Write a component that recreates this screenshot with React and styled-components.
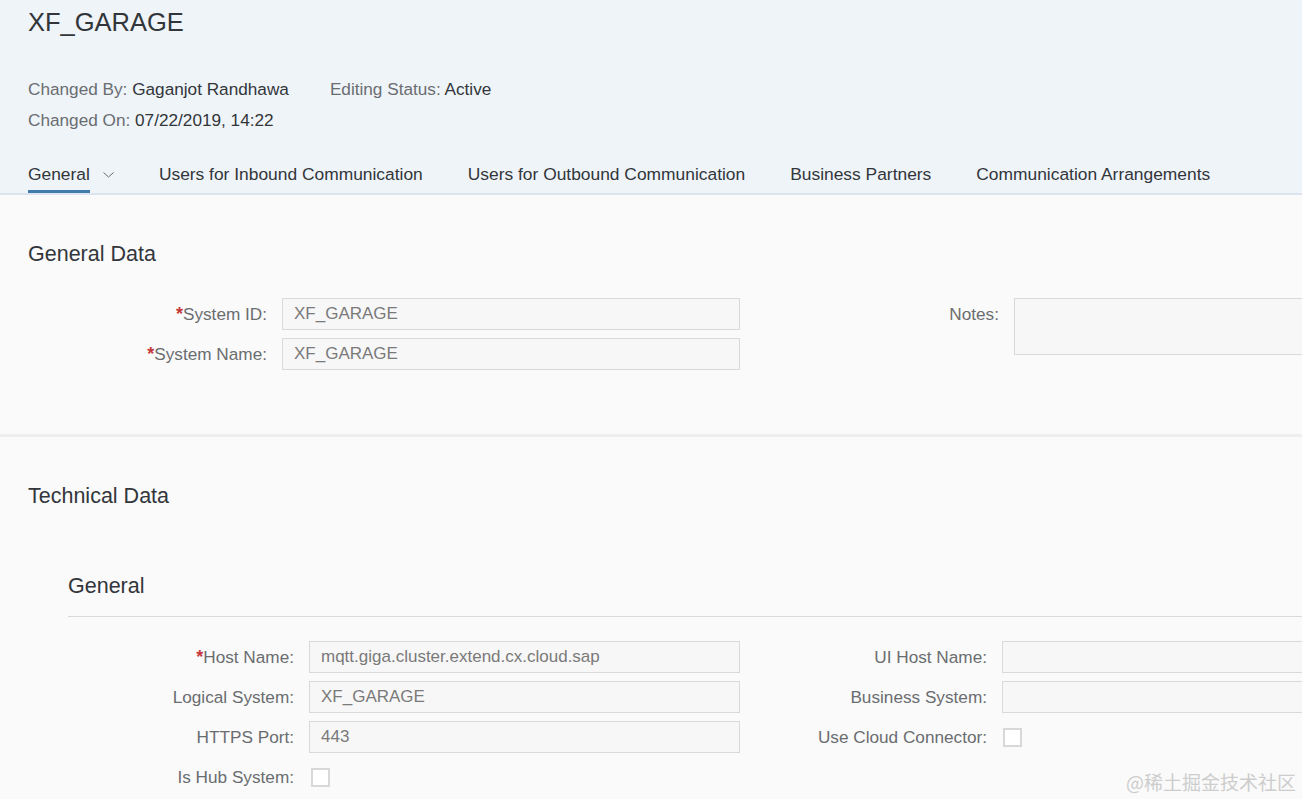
import React from 'react';
import styled, { createGlobalStyle } from 'styled-components';

const GlobalStyle = createGlobalStyle`
  html, body { margin: 0; padding: 0; background: #fafafa; }
  body { font-family: "Liberation Sans", Arial, sans-serif; }
  * { box-sizing: border-box; }
`;

const Page = styled.div`
  width: 1302px;
  height: 799px;
  overflow: hidden;
  position: relative;
  background: #fafafa;
  color: #32363a;
`;

const Header = styled.header`
  background: #eff4f9;
  padding: 6px 28px 0;
  border-bottom: 2px solid #dce5ef;
`;

const Title = styled.h1`
  margin: 0;
  font-size: 25.5px;
  font-weight: normal;
  line-height: 32px;
  color: #32363a;
`;

const Meta = styled.div`
  margin-top: 36px;
  display: flex;
  gap: 41px;
`;

const MetaColumn = styled.div`
  display: flex;
  flex-direction: column;
`;

const MetaLine = styled.div`
  font-size: 17.2px;
  line-height: 31px;
  white-space: nowrap;
`;

const MetaLabel = styled.span`
  color: #6a6d70;
`;

const MetaValue = styled.span`
  color: #32363a;
`;

const TabBar = styled.nav`
  display: flex;
  gap: 45px;
`;

const Tab = styled.div`
  display: flex;
  align-items: flex-start;
`;

const TabLabel = styled.span`
  font-size: 17.4px;
  line-height: 20px;
  padding: 28px 0 6px;
  color: #32363a;
  border-bottom: 3px solid ${p => (p.$active ? '#427cac' : 'transparent')};
  white-space: nowrap;
`;

const Chevron = styled.svg`
  margin: 28px 0 0 13px;
  width: 11px;
  height: 20px;
`;

const Section = styled.section`
  padding: 45px 0 ${p => p.$padBottom}px 28px;
  border-bottom: ${p => (p.$divider ? '3px solid #eeeeee' : 'none')};
`;

const SectionTitle = styled.h2`
  margin: 0;
  font-size: 21.5px;
  font-weight: normal;
  line-height: 28px;
  color: #32363a;
`;

const SubSection = styled.div`
  margin: 62px 0 0 40px;
`;

const SubTitle = styled.h3`
  margin: 0;
  font-size: 21.5px;
  font-weight: normal;
  line-height: 28px;
  padding-bottom: 16px;
  border-bottom: 1px solid #d9d9d9;
  color: #32363a;
`;

const Form = styled.div`
  margin-top: ${p => p.$top}px;
  display: flex;
  align-items: flex-start;
  gap: ${p => p.$gap}px;
`;

const FormColumn = styled.div`
  flex-shrink: 0;
  display: grid;
  grid-template-columns: ${p => p.$label}px ${p => p.$field}px;
  column-gap: 15px;
  row-gap: 8px;
  align-items: start;
  align-content: start;
`;

const Label = styled.label`
  text-align: right;
  font-size: 17.2px;
  line-height: 32px;
  color: #6a6d70;
  white-space: nowrap;
`;

const Req = styled.span`
  color: #c4393b;
  font-weight: bold;
  font-size: 18px;
`;

const Field = styled.div`
  height: ${p => p.$height || 32}px;
  background: #f7f7f7;
  border: 1px solid #d9d9d9;
  padding: 0 11px;
  font-size: 17px;
  line-height: 30px;
  color: #7a7a7a;
  white-space: nowrap;
  overflow: hidden;
`;

const Checkbox = styled.div`
  width: 19px;
  height: 19px;
  margin: 7px 0 0 ${p => p.$offset || 2}px;
  border: 2px solid #d8d8d8;
  background: #ffffff;
`;

const Watermark = styled.div`
  position: absolute;
  right: 6px;
  bottom: 4px;
  font-family: "Noto Sans CJK SC", sans-serif;
  font-size: 19px;
  color: #cdcdcd;
  white-space: nowrap;
`;

const ChevronIcon = () => (
  <Chevron viewBox="0 0 11 20">
    <path d="M0.5 8.5 L5.5 13 L10.5 8.5" fill="none" stroke="#6a6d70" strokeWidth="1" />
  </Chevron>
);

const Row = ({ label, required, children }) => (
  <>
    <Label>
      {required && <Req>*</Req>}
      {label}:
    </Label>
    {children}
  </>
);

const tabs = [
  'General',
  'Users for Inbound Communication',
  'Users for Outbound Communication',
  'Business Partners',
  'Communication Arrangements',
];

export default function App() {
  return (
    <Page>
      <GlobalStyle />
      <Header>
        <Title>XF_GARAGE</Title>
        <Meta>
          <MetaColumn>
            <MetaLine>
              <MetaLabel>Changed By: </MetaLabel>
              <MetaValue>Gaganjot Randhawa</MetaValue>
            </MetaLine>
            <MetaLine>
              <MetaLabel>Changed On: </MetaLabel>
              <MetaValue>07/22/2019, 14:22</MetaValue>
            </MetaLine>
          </MetaColumn>
          <MetaColumn>
            <MetaLine>
              <MetaLabel>Editing Status: </MetaLabel>
              <MetaValue>Active</MetaValue>
            </MetaLine>
          </MetaColumn>
        </Meta>
        <TabBar>
          {tabs.map((t, i) => (
            <Tab key={t}>
              <TabLabel $active={i === 0}>{t}</TabLabel>
              {i === 0 && <ChevronIcon />}
            </Tab>
          ))}
        </TabBar>
      </Header>

      <Section $padBottom={64} $divider>
        <SectionTitle>General Data</SectionTitle>
        <Form $top={30} $gap={20}>
          <FormColumn $label={239} $field={458}>
            <Row label="System ID" required>
              <Field>XF_GARAGE</Field>
            </Row>
            <Row label="System Name" required>
              <Field>XF_GARAGE</Field>
            </Row>
          </FormColumn>
          <FormColumn $label={239} $field={458}>
            <Row label="Notes">
              <Field $height={57} />
            </Row>
          </FormColumn>
        </Form>
      </Section>

      <Section $padBottom={0}>
        <SectionTitle>Technical Data</SectionTitle>
        <SubSection>
          <SubTitle>General</SubTitle>
          <Form $top={24} $gap={21}>
            <FormColumn $label={226} $field={431}>
              <Row label="Host Name" required>
                <Field>mqtt.giga.cluster.extend.cx.cloud.sap</Field>
              </Row>
              <Row label="Logical System">
                <Field>XF_GARAGE</Field>
              </Row>
              <Row label="HTTPS Port">
                <Field>443</Field>
              </Row>
              <Row label="Is Hub System">
                <Checkbox $offset={2} />
              </Row>
            </FormColumn>
            <FormColumn $label={226} $field={431}>
              <Row label="UI Host Name">
                <Field />
              </Row>
              <Row label="Business System">
                <Field />
              </Row>
              <Row label="Use Cloud Connector">
                <Checkbox $offset={1} />
              </Row>
            </FormColumn>
          </Form>
        </SubSection>
      </Section>

      <Watermark>@稀土掘金技术社区</Watermark>
    </Page>
  );
}
